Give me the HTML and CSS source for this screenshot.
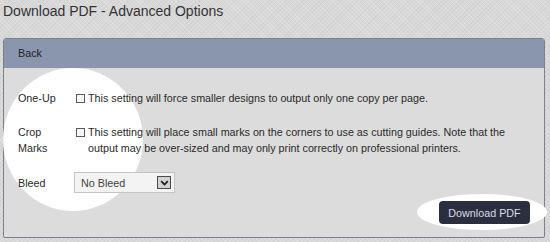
FILE: index.html
```html
<!DOCTYPE html>
<html>
<head>
<meta charset="utf-8">
<link rel="stylesheet" href="styles.css">
</head>
<body>
<h1 class="title">Download PDF - Advanced Options</h1>
<div class="panel">
  <div class="panel-head">Back</div>
  <div class="panel-body">
    <div class="spot spot-circle"></div>
    <div class="row row-oneup">
      <div class="label">One-Up</div>
      <div class="field"><span class="check"></span><span class="desc">This setting will force smaller designs to output only one copy per page.</span></div>
    </div>
    <div class="row row-crop">
      <div class="label">Crop<br>Marks</div>
      <div class="field"><span class="check"></span><span class="desc">This setting will place small marks on the corners to use as cutting guides. Note that the output may be over-sized and may only print correctly on professional printers.</span></div>
    </div>
    <div class="row row-bleed">
      <div class="label">Bleed</div>
      <div class="field">
        <div class="select"><span class="select-text">No Bleed</span><span class="select-arrow"><svg width="9" height="6" viewBox="0 0 9 6"><path d="M1.2 1.2 L4.5 4.5 L7.8 1.2" fill="none" stroke="#1a1a1a" stroke-width="1.7"/></svg></span></div>
      </div>
    </div>
    <div class="actions">
      <div class="spot spot-ellipse"></div>
      <button class="btn">Download PDF</button>
    </div>
  </div>
</div>
</body>
</html>
```

FILE: styles.css
```css
html, body {
  margin: 0;
  padding: 0;
}
body {
  width: 550px;
  height: 242px;
  overflow: hidden;
  padding: 2px 0 0 3px;
  box-sizing: border-box;
  font-family: "Liberation Sans", Arial, sans-serif;
  color: #2a2a2a;
  background-color: #d8d8d8;
  background-image:
    repeating-linear-gradient(45deg, rgba(255,255,255,0.18) 0 1px, rgba(0,0,0,0) 1px 3px),
    repeating-linear-gradient(-45deg, rgba(0,0,0,0.035) 0 1px, rgba(0,0,0,0) 1px 3px);
}
.title {
  margin: 0;
  font-size: 14px;
  line-height: 18px;
  font-weight: normal;
  color: #333;
}
.panel {
  position: relative;
  margin-top: 18px;
  width: 542px;
  border: 1px solid #7c8088;
  border-radius: 3px 3px 2px 2px;
  box-sizing: border-box;
  background: #dcdcdc;
}
.panel-head {
  height: 29px;
  line-height: 29px;
  padding-left: 14px;
  background: #8a96ae;
  font-size: 10.75px;
  color: #222;
  border-radius: 2px 2px 0 0;
}
.panel-body {
  padding: 22px 14px 13px 14px;
  height: 169px;
  box-sizing: border-box;
  display: flex;
  flex-direction: column;
}
.spot {
  position: absolute;
  background: #fff;
  border-radius: 50%;
}
.spot-circle {
  left: -1px;
  top: 29px;
  width: 140px;
  height: 143px;
}
.row {
  position: relative;
  display: flex;
  font-size: 10.75px;
  line-height: 16px;
}
.row-crop { margin-top: 18px; }
.row-bleed { margin-top: 16px; align-items: center; }
.label {
  width: 56px;
  flex: none;
}
.field {
  display: flex;
  align-items: flex-start;
  width: 455px;
}
.check {
  flex: none;
  width: 9px;
  height: 9px;
  box-sizing: border-box;
  border: 1px solid #5a5a5a;
  background: #f7f7f7;
  margin: 4px 3px 0 2px;
}
.desc {
  color: #2a2a2a;
}
.select {
  width: 101px;
  height: 21px;
  box-sizing: border-box;
  border: 1px solid #c4c4c4;
  background: #f3f3f3;
  display: flex;
  align-items: center;
  justify-content: space-between;
  padding: 0 3px 0 6px;
}
.select-text {
  font-size: 10.75px;
  color: #444;
}
.select-arrow {
  width: 14px;
  height: 13px;
  box-sizing: border-box;
  border: 1px solid #4a4a4a;
  background: #d2d2d2;
  display: flex;
  align-items: center;
  justify-content: center;
}
.actions {
  margin-top: auto;
  display: flex;
  justify-content: flex-end;
}
.spot-ellipse {
  right: -3px;
  bottom: 7px;
  width: 130px;
  height: 36px;
  z-index: 1;
}
.btn {
  position: relative;
  z-index: 2;
  width: 91px;
  height: 23px;
  border: none;
  border-radius: 4px;
  background: #2b2e3e;
  color: #d8dbe6;
  font-family: "Liberation Sans", Arial, sans-serif;
  font-size: 10.75px;
  padding: 0;
  cursor: pointer;
}
```
